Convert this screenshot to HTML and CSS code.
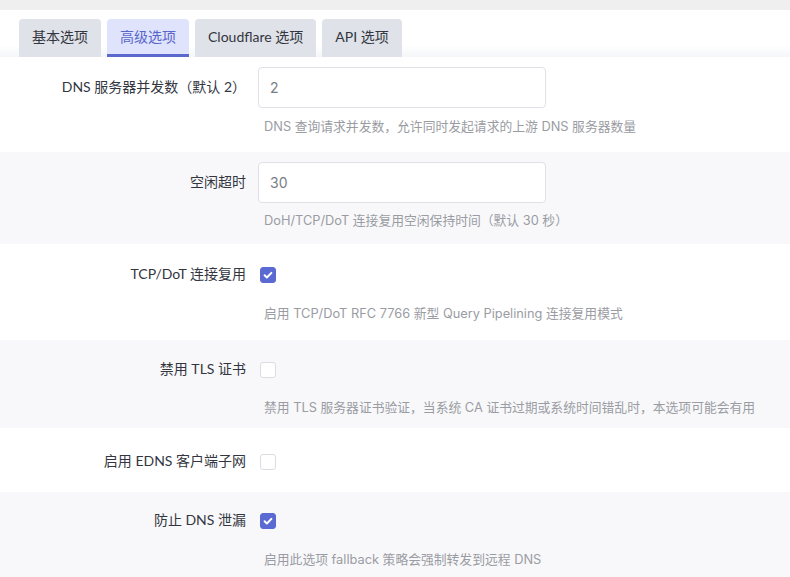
FILE: index.html
```html
<!DOCTYPE html>
<html lang="zh-CN">
<head>
<meta charset="utf-8">
<title>高级选项</title>
<link rel="stylesheet" href="styles.css">
</head>
<body>
<div class="page">
  <div class="panel">
    <div class="tabs">
      <div class="tab">基本选项</div>
      <div class="tab active">高级选项</div>
      <div class="tab">Cloudflare 选项</div>
      <div class="tab">API 选项</div>
    </div>
    <div class="form">
      <div class="row r1">
        <div class="label">DNS 服务器并发数（默认 2）</div>
        <div class="field">
          <div class="control"><div class="input">2</div></div>
          <div class="desc">DNS 查询请求并发数，允许同时发起请求的上游 DNS 服务器数量</div>
        </div>
      </div>
      <div class="row alt r2">
        <div class="label">空闲超时</div>
        <div class="field">
          <div class="control"><div class="input">30</div></div>
          <div class="desc">DoH/TCP/DoT 连接复用空闲保持时间（默认 30 秒）</div>
        </div>
      </div>
      <div class="row r3">
        <div class="label">TCP/DoT 连接复用</div>
        <div class="field">
          <div class="control"><span class="check on"><svg viewBox="0 0 16 16" width="16" height="16"><path d="M4.6 8.3l2.3 2.2 4.5-4.6" fill="none" stroke="#fff" stroke-width="2" stroke-linecap="round" stroke-linejoin="round"/></svg></span></div>
          <div class="desc">启用 TCP/DoT RFC 7766 新型 Query Pipelining 连接复用模式</div>
        </div>
      </div>
      <div class="row alt r4">
        <div class="label">禁用 TLS 证书</div>
        <div class="field">
          <div class="control"><span class="check"></span></div>
          <div class="desc">禁用 TLS 服务器证书验证，当系统 CA 证书过期或系统时间错乱时，本选项可能会有用</div>
        </div>
      </div>
      <div class="row r5">
        <div class="label">启用 EDNS 客户端子网</div>
        <div class="field">
          <div class="control"><span class="check"></span></div>
        </div>
      </div>
      <div class="row alt r6">
        <div class="label">防止 DNS 泄漏</div>
        <div class="field">
          <div class="control"><span class="check on"><svg viewBox="0 0 16 16" width="16" height="16"><path d="M4.6 8.3l2.3 2.2 4.5-4.6" fill="none" stroke="#fff" stroke-width="2" stroke-linecap="round" stroke-linejoin="round"/></svg></span></div>
          <div class="desc">启用此选项 fallback 策略会强制转发到远程 DNS</div>
        </div>
      </div>
    </div>
  </div>
</div>
</body>
</html>
```

FILE: styles.css
```css
html, body {
  margin: 0;
  padding: 0;
  background: #efefef;
  font-family: Inter, "Noto Sans", "Noto Sans CJK SC", sans-serif;
  font-size: 13px;
  color: #33363f;
}
.page {
  padding-top: 10px;
  height: 567px;
  overflow: hidden;
}
.panel {
  background: #fff;
  border-top-left-radius: 10px;
  height: 100%;
}
.tabs {
  display: flex;
  gap: 6px;
  padding: 9px 0 0 19px;
  height: 38px;
  background: linear-gradient(to bottom, #fff 0, #fff 75%, #f5f6f9 100%);
}
.tab {
  height: 38px;
  line-height: 36px;
  padding: 0 13px;
  background: #dfe2e8;
  border-radius: 4px 4px 0 0;
  color: #33363f;
  box-sizing: border-box;
  font-family: Lato, "Noto Sans CJK SC", sans-serif;
  font-size: 14px;
}
.tab.active {
  background: #dfe3fb;
  color: #5866cc;
  border-bottom: 3px solid #5b69cf;
}
.row {
  display: flex;
  padding-top: 10px;
  box-sizing: border-box;
}
.row.alt { background: #f8f8fa; }
.r1 { height: 95px; }
.r2 { height: 92px; }
.r3 { height: 96px; }
.r4 { height: 88px; padding-top: 9px; }
.r5 { height: 64px; padding-top: 13px; }
.r6 { height: 90px; padding-top: 8px; }
.label {
  width: 246px;
  flex: none;
  text-align: right;
  line-height: 40px;
  height: 41px;
  font-family: Lato, "Noto Sans CJK SC", sans-serif;
  font-size: 14px;
  color: #33363f;
}
.field {
  margin-left: 12px;
  display: flex;
  flex-direction: column;
}
.control {
  height: 41px;
  display: flex;
  align-items: center;
}
.input {
  width: 288px;
  height: 41px;
  box-sizing: border-box;
  border: 1px solid #dfe1e6;
  border-radius: 4px;
  background: #fff;
  padding-left: 11px;
  line-height: 39px;
  font-size: 14px;
  color: #7a7d85;
}
.check {
  width: 16px;
  height: 16px;
  margin-left: 2px;
  box-sizing: border-box;
  border: 1px solid #dcdde2;
  border-radius: 3px;
  background: #fff;
  display: block;
}
.check.on {
  background: #5a6ad2;
  border-color: #5a6ad2;
}
.check svg { display: block; margin: -1px; }
.desc {
  padding-left: 6px;
  margin-top: 9px;
  line-height: 20px;
  font-size: 12.8px;
  color: #9a9ca3;
  white-space: nowrap;
}
.r2 .desc { margin-top: 8px; }
.r4 .desc { margin-top: 8px; }
```
